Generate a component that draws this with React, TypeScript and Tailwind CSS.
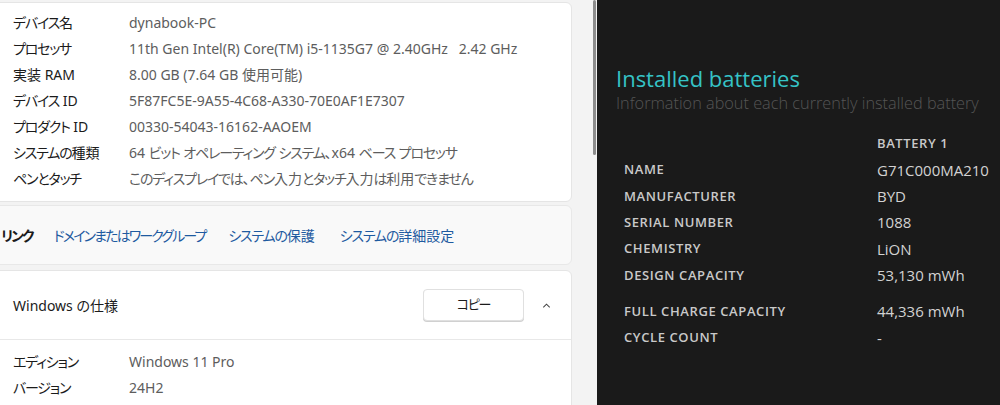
import React from 'react';

const specs: [string, string][] = [
  ['デバイス名', 'dynabook-PC'],
  ['プロセッサ', '11th Gen Intel(R) Core(TM) i5-1135G7 @ 2.40GHz   2.42 GHz'],
  ['実装 RAM', '8.00 GB (7.64 GB 使用可能)'],
  ['デバイス ID', '5F87FC5E-9A55-4C68-A330-70E0AF1E7307'],
  ['プロダクト ID', '00330-54043-16162-AAOEM'],
  ['システムの種類', '64 ビット オペレーティング システム、x64 ベース プロセッサ'],
  ['ペンとタッチ', 'このディスプレイでは、ペン入力とタッチ入力は利用できません'],
];

const winSpecs: [string, string][] = [
  ['エディション', 'Windows 11 Pro'],
  ['バージョン', '24H2'],
];

// label, value, extra gap above
const battery: [string, string, boolean?][] = [
  ['NAME', 'G71C000MA210'],
  ['MANUFACTURER', 'BYD'],
  ['SERIAL NUMBER', '1088'],
  ['CHEMISTRY', 'LiON'],
  ['DESIGN CAPACITY', '53,130 mWh'],
  ['FULL CHARGE CAPACITY', '44,336 mWh', true],
  ['CYCLE COUNT', '-'],
];

// kana in Yu Gothic UI sits tighter than in Noto CJK, so squeeze kana runs
const Jp = ({ text, tight }: { text: string; tight?: boolean }) => (
  <>
    {text.split(/([\u3040-\u30ff]+)/).map((part, i) =>
      /[\u3040-\u30ff]/.test(part) ? (
        <span key={i} className={tight ? 'tracking-[-1.9px]' : 'tracking-[-1.2px]'}>
          {part}
        </span>
      ) : (
        <span key={i}>{part}</span>
      )
    )}
  </>
);

const SpecRow = ({ label, value }: { label: string; value: string }) => (
  <div className="flex h-[26px] items-center text-[14px]">
    <div className="w-[116px] shrink-0 text-[#1b1b1b]">
      <Jp text={label} />
    </div>
    <div className="whitespace-pre text-[#5d5d5d]">
      <Jp text={value} />
    </div>
  </div>
);

export default function App() {
  return (
    <div className="flex h-[405px] w-[1000px] overflow-hidden bg-[#f3f3f3] font-['Noto_Sans','Noto_Sans_CJK_JP',sans-serif] [font-feature-settings:'palt']">
      {/* settings window */}
      <div className="relative w-[597px] shrink-0 bg-[#f3f3f3]">
        <div className="-ml-[8px] flex w-[580px] flex-col pt-[2px]">
          <div className="rounded-md border border-[#e5e5e5] bg-white pb-[10px] pl-[20px] pt-[6px]">
            {specs.map(([l, v]) => (
              <SpecRow key={l} label={l} value={v} />
            ))}
          </div>

          <div className="mt-[3px] flex h-[60px] items-center rounded-md border border-[#e8e8e8] bg-[#f9f9f9] pl-[8px] text-[14px]">
            <span className="font-semibold text-[#1b1b1b]">
              <Jp text="リンク" tight />
            </span>
            <span className="ml-[21px] text-[#1e5aa0]">
              <Jp text="ドメインまたはワークグループ" tight />
            </span>
            <span className="ml-[23px] text-[#1e5aa0]">
              <Jp text="システムの保護" />
            </span>
            <span className="ml-[25px] text-[#1e5aa0]">
              <Jp text="システムの詳細設定" />
            </span>
          </div>

          <div className="mt-[5px] h-[200px] rounded-md border border-[#e5e5e5] bg-white">
            <div className="flex h-[69px] items-center border-b border-[#e8e8e8] pl-[20px] pr-[19px]">
              <span className="text-[14px] text-[#1b1b1b]">Windows の仕様</span>
              <button className="ml-auto flex h-[32px] w-[101px] items-center justify-center rounded-[4px] border border-[#e0e0e0] bg-white text-[13px] text-[#1b1b1b] shadow-[0_1px_0_#d0d0d0]">
                <Jp text="コピー" />
              </button>
              <svg className="ml-[17px]" width="11" height="11" viewBox="0 0 12 12" fill="none">
                <path d="M2.5 8 L6 4.5 L9.5 8" stroke="#444" strokeWidth="1.1" />
              </svg>
            </div>
            <div className="pl-[20px] pt-[8px]">
              {winSpecs.map(([l, v]) => (
                <SpecRow key={l} label={l} value={v} />
              ))}
            </div>
          </div>
        </div>
        <div className="absolute left-[593px] top-0 h-[155px] w-[3px] rounded-full bg-[#8c8c8c]" />
      </div>

      {/* battery report */}
      <div className="flex-1 bg-[#1a1a1a] pl-[19px] pt-[63px] font-['Open_Sans','Noto_Sans',sans-serif]">
        <div className="text-[22px] leading-[30px] text-[#35c3c6]">Installed batteries</div>
        <div className="text-[16.3px] font-light leading-[20px] text-[#555555]">
          Information about each currently installed battery
        </div>
        <div className="mt-[18px] pl-[8px]">
          <div className="flex h-[26px] items-center">
            <div className="w-[253px]" />
            <div className="text-[13px] font-semibold tracking-[0.6px] text-[#c9c9c9]">BATTERY 1</div>
          </div>
          {battery.map(([l, v, gap]) => (
            <div key={l} className={gap ? 'mt-[10px] flex h-[26.3px] items-center' : 'flex h-[26.3px] items-center'}>
              <div className="w-[253px] text-[13px] font-semibold tracking-[0.6px] text-[#c9c9c9]">{l}</div>
              <div className="text-[15px] text-[#d2d2d2]">{v}</div>
            </div>
          ))}
        </div>
      </div>
    </div>
  );
}
